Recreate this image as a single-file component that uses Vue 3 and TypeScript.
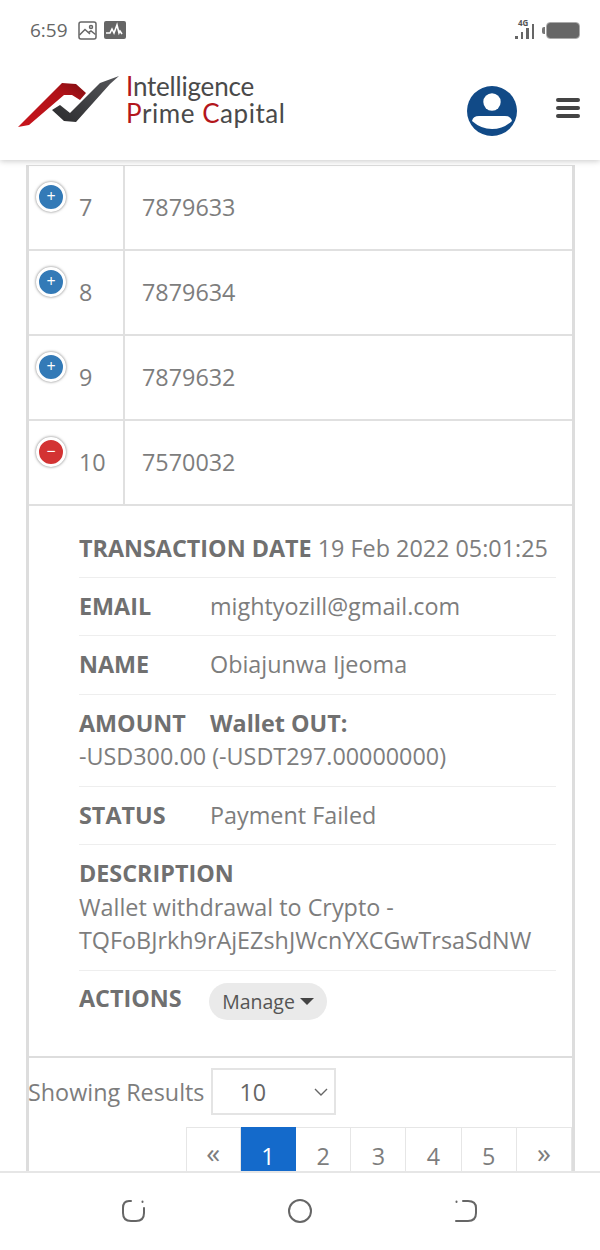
<template>
  <div class="screen">
    <div class="status-bar">
      <div class="status-left">
        <span class="time">6:59</span>
        <svg width="19" height="19" viewBox="0 0 19 19" fill="none" stroke="#666" stroke-width="1.5">
          <rect x="1" y="1" width="17" height="17" rx="2" />
          <circle cx="13" cy="6" r="1.5" />
          <path d="M1.5 14 L7 8.5 L12 13 M10.5 11.5 L13 10 L17.5 13.5" />
        </svg>
        <svg class="pulse" width="22" height="18" viewBox="0 0 22 18">
          <rect width="22" height="18" rx="2" fill="#666" />
          <path d="M2 12 H6 L8 8 L10 12 L13 4 L15 12 L16 10 L18 13" fill="none" stroke="#fff" stroke-width="1.6" />
        </svg>
      </div>
      <div class="status-right">
        <div class="signal">
          <span class="net">4G</span>
          <i style="height: 3px"></i>
          <i style="height: 7px"></i>
          <i style="height: 11px"></i>
          <i style="height: 15px"></i>
        </div>
        <div class="battery-tip"></div>
        <div class="battery"><div class="battery-fill"></div></div>
      </div>
    </div>

    <header class="header">
      <div class="brand">
        <svg class="brand-mark" width="104" height="56" viewBox="0 0 104 56">
          <defs>
            <linearGradient id="redMark" x1="0" y1="1" x2="1" y2="0">
              <stop offset="0" stop-color="#c8141c" />
              <stop offset="0.7" stop-color="#b01218" />
              <stop offset="1" stop-color="#7c0f12" />
            </linearGradient>
            <linearGradient id="darkMark" x1="0" y1="1" x2="1" y2="0">
              <stop offset="0" stop-color="#2c2c2e" />
              <stop offset="1" stop-color="#55565a" />
            </linearGradient>
          </defs>
          <path d="M0 55 L44 11 L58 12 L68 21 L62 28 L54 23 L46 23 L11 53 Z" fill="url(#redMark)" />
          <path d="M34 38 L42 33 L52 41 L82 11 L101 4 L92 12 L58 50 L46 49 Z" fill="url(#darkMark)" />
        </svg>
        <div class="brand-name">
          <div class="line-one"><b>I</b>ntelligence</div>
          <div class="line-two"><b>P</b>rime <b>C</b>apital</div>
        </div>
      </div>
      <div class="header-actions">
        <svg class="avatar" width="52" height="52" viewBox="0 0 52 52">
          <circle cx="26" cy="26" r="25" fill="#114a87" />
          <circle cx="26" cy="17" r="8.7" fill="#fff" />
          <path d="M6 36 Q7 31 13 31 H39 Q45 31 46 36 Q37 44 26 44 Q15 44 6 36 Z" fill="#fff" />
        </svg>
        <div class="burger"><span></span><span></span><span></span></div>
      </div>
    </header>

    <main class="content">
      <div class="table">
        <div v-for="row in rows" :key="row.no" class="row">
          <div class="cell-no">
            <span :class="['toggle', { open: row.open }]">{{ row.open ? '−' : '+' }}</span>
            {{ row.no }}
          </div>
          <div class="cell-ref">{{ row.ref }}</div>
        </div>

        <ul class="details">
          <li><b class="auto">TRANSACTION DATE</b> 19 Feb 2022 05:01:25</li>
          <li><b>EMAIL</b>mightyozill@gmail.com</li>
          <li><b>NAME</b>Obiajunwa Ijeoma</li>
          <li><b>AMOUNT</b><b class="auto">Wallet OUT:</b><br />-USD300.00 (-USDT297.00000000)</li>
          <li><b>STATUS</b>Payment Failed</li>
          <li>
            <b class="auto">DESCRIPTION</b><br />
            Wallet withdrawal to Crypto -<br />
            TQFoBJrkh9rAjEZshJWcnYXCGwTrsaSdNW
          </li>
          <li class="actions">
            <b>ACTIONS</b>
            <button class="manage">Manage<span class="caret"></span></button>
          </li>
        </ul>

        <div class="foot">
          <div class="results">
            <span>Showing Results</span>
            <div class="select">
              <span>10</span>
              <svg width="16" height="10" viewBox="0 0 16 10" fill="none" stroke="#666" stroke-width="1.4">
                <path d="M2 2 L8 8 L14 2" />
              </svg>
            </div>
          </div>
          <div class="pagination">
            <span
              v-for="p in pages"
              :key="p"
              :class="['page', { active: p === '1', arrow: p === '«' || p === '»' }]"
            >{{ p }}</span>
          </div>
        </div>
      </div>
    </main>

    <nav class="nav">
      <svg width="26" height="26" viewBox="0 0 26 26" fill="none" stroke="#666" stroke-width="2" stroke-linecap="round">
        <path d="M10 3 H8 Q2 3 2 10 V15 Q2 23 10 23 H15 Q23 23 23 15 V10" />
        <path d="M21.5 3.5 V4" />
      </svg>
      <svg width="26" height="28" viewBox="0 0 26 28" fill="none" stroke="#666" stroke-width="2">
        <circle cx="13" cy="14" r="11" />
      </svg>
      <svg width="26" height="26" viewBox="0 0 26 26" fill="none" stroke="#666" stroke-width="2" stroke-linecap="round">
        <path d="M10 3 H15 Q23 3 23 10 V15 Q23 23 15 23 H3" />
        <path d="M3.5 3.5 V4" />
      </svg>
    </nav>
  </div>
</template>

<script setup lang="ts">
interface Row {
  no: number;
  ref: string;
  open?: boolean;
}

const rows: Row[] = [
  { no: 7, ref: '7879633' },
  { no: 8, ref: '7879634' },
  { no: 9, ref: '7879632' },
  { no: 10, ref: '7570032', open: true },
];

const pages = ['«', '1', '2', '3', '4', '5', '»'];
</script>

<style>
html,
body {
  margin: 0;
  background: #fff;
}
</style>

<style scoped>
.screen {
  width: 600px;
  height: 1250px;
  display: flex;
  flex-direction: column;
  overflow: hidden;
  background: #fff;
  font-family: 'Open Sans', 'Liberation Sans', sans-serif;
  color: #7d7d7d;
}

.status-bar {
  position: relative;
  z-index: 3;
  height: 60px;
  flex: none;
  display: flex;
  justify-content: space-between;
  align-items: center;
  padding: 0 20px 0 30px;
  box-sizing: border-box;
  background: #fff;
}

.status-left {
  display: flex;
  align-items: center;
  gap: 10px;
}

.pulse {
  margin-left: -3px;
}

.time {
  font-size: 19px;
  color: #666;
}

.status-right {
  display: flex;
  align-items: center;
}

.signal {
  position: relative;
  display: flex;
  align-items: flex-end;
  gap: 3px;
  height: 18px;
  margin-right: 8px;
}

.signal i {
  width: 2.5px;
  background: #666;
}

.net {
  position: absolute;
  left: 3px;
  top: -4px;
  font-size: 8px;
  font-weight: 700;
  color: #555;
}

.battery-tip {
  width: 3px;
  height: 7px;
  background: #777;
  border-radius: 2px 0 0 2px;
  margin-right: 1px;
}

.battery {
  width: 34px;
  height: 17px;
  box-sizing: border-box;
  border: 1px solid #aaa;
  border-radius: 4px;
  background: #fff;
}

.battery-fill {
  height: 100%;
  border-radius: 3px;
  background: #666;
}

.header {
  height: 100px;
  flex: none;
  box-sizing: border-box;
  display: flex;
  justify-content: space-between;
  align-items: center;
  padding: 0 20px 0 18px;
  background: #fff;
  box-shadow: 0 1px 6px rgba(0, 0, 0, 0.22);
  position: relative;
  z-index: 2;
}

.brand {
  display: flex;
  align-items: center;
  gap: 4px;
  margin-top: -18px;
}

.brand-mark {
  margin-top: -3px;
}

.brand-name {
  font-family: Lato, 'Liberation Sans', sans-serif;
  font-size: 26px;
  line-height: 27px;
  color: #4a4a4a;
  font-weight: 400;
  margin-top: -2px;
}

.line-one {
  letter-spacing: -0.2px;
}

.line-two {
  letter-spacing: 0.55px;
}

.brand-name b {
  color: #b3161c;
  font-weight: 400;
}

.header-actions {
  display: flex;
  align-items: center;
  gap: 38px;
}

.avatar {
  margin-top: 2px;
}

.burger {
  display: flex;
  flex-direction: column;
  gap: 4px;
  margin-top: -5px;
}

.burger span {
  width: 24px;
  height: 4px;
  border-radius: 2px;
  background: #444;
}

.content {
  flex: 1;
  min-height: 0;
  overflow: hidden;
  padding: 5px 25px 0 26px;
}

.table {
  border-left: 3px solid #ddd;
  border-right: 3px solid #ddd;
  border-top: 1px solid #ddd;
  font-size: 23.35px;
}

.row {
  display: flex;
  height: 85px;
  box-sizing: border-box;
  border-bottom: 2px solid #e0e0e0;
}

.cell-no {
  position: relative;
  width: 96px;
  box-sizing: border-box;
  padding: 0 0 1px 50px;
  border-right: 2px solid #e0e0e0;
  display: flex;
  align-items: center;
}

.cell-ref {
  display: flex;
  align-items: center;
  padding: 0 0 1px 17px;
}

.toggle {
  position: absolute;
  left: 7px;
  top: 16px;
  width: 24px;
  height: 24px;
  border: 3px solid #fff;
  border-radius: 50%;
  background: #337ab7;
  box-shadow: 0 0 3px #777;
  color: #fff;
  font-size: 16px;
  line-height: 23px;
  text-align: center;
}

.toggle.open {
  background: #d33333;
}

.details {
  list-style: none;
  margin: 0;
  padding: 14px 16px 0 50px;
  height: 552px;
  box-sizing: border-box;
  border-bottom: 2px solid #ddd;
}

.details li {
  padding: 12px 0;
  line-height: 33.5px;
  border-bottom: 1px solid #eee;
}

.details li:first-child {
  padding-top: 12px;
  padding-bottom: 11px;
}

.details li:last-child {
  border-bottom: 0;
}

.details b {
  display: inline-block;
  min-width: 131px;
  font-weight: 700;
  color: #707070;
}

.details b.auto {
  min-width: 0;
}

.details .actions {
  display: flex;
  align-items: center;
}

.actions b {
  margin-top: -4px;
}

.manage {
  height: 37px;
  width: 118px;
  margin-left: -1px;
  padding: 0;
  border: 0;
  border-radius: 19px;
  background: #eaeaea;
  color: #555;
  font-family: inherit;
  font-size: 19.5px;
  display: flex;
  align-items: center;
  justify-content: center;
}

.caret {
  width: 0;
  height: 0;
  margin-left: 5px;
  border-left: 7px solid transparent;
  border-right: 7px solid transparent;
  border-top: 7px solid #444;
}

.foot {
  display: flex;
  flex-direction: column;
  align-items: flex-end;
}

.results {
  align-self: flex-start;
  display: flex;
  align-items: center;
  gap: 6px;
  height: 47px;
  margin-top: 10px;
  margin-left: -1px;
}

.select {
  width: 125px;
  height: 47px;
  box-sizing: border-box;
  border: 2px solid #e4e4e4;
  display: flex;
  align-items: center;
  justify-content: space-between;
  padding: 0 5px 0 27px;
  color: #666;
}

.pagination {
  display: flex;
  margin-top: 12px;
}

.page {
  width: 55.2px;
  height: 60px;
  box-sizing: border-box;
  border: 1px solid #e6e6e6;
  border-left-width: 0;
  text-align: center;
  line-height: 56px;
}

.page:first-child {
  border-left-width: 1px;
}

.page.arrow {
  font-size: 28px;
  line-height: 48px;
}

.page.active {
  background: #146acb;
  border-color: #146acb;
  color: #fff;
}

.nav {
  position: relative;
  z-index: 2;
  height: 79px;
  flex: none;
  box-sizing: border-box;
  border-top: 2px solid #e6e6e6;
  background: #fff;
  display: flex;
  justify-content: space-between;
  align-items: center;
  padding: 0 121px 2px;
}
</style>
